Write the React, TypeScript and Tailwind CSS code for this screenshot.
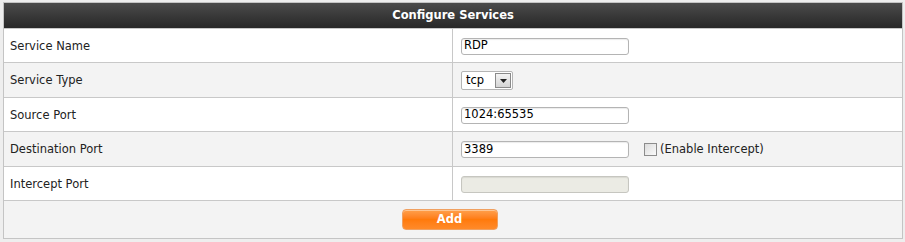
const font = { fontFamily: '"DejaVu Sans", Verdana, sans-serif' }

interface RowProps {
  label: string
  shaded?: boolean
  height: string
  children?: React.ReactNode
}

function FormRow({ label, shaded, height, children }: RowProps) {
  return (
    <div className={`flex border-b border-[#c8c8c8] ${height} ${shaded ? 'bg-[#f3f3f3]' : 'bg-white'}`}>
      <div className="flex w-[449px] items-center border-r border-[#c8c8c8] pl-[6px] pt-[2px] text-[11.5px] text-[#222]">
        {label}
      </div>
      <div className="flex flex-1 items-center pl-[8px] pt-[1px]">{children}</div>
    </div>
  )
}

function TextBox({ value, disabled }: { value?: string, disabled?: boolean }) {
  return (
    <div
      className={`flex h-[17px] w-[168px] items-center rounded-[3px] border px-[2px] text-[11.5px] text-black shadow-[inset_0_1px_1px_rgba(0,0,0,0.08)] ${
        disabled ? 'border-[#c6c6c0] bg-[#ebebe4]' : 'border-[#b4b4b4] bg-white'
      }`}
    >
      {value}
    </div>
  )
}

export default function App() {
  return (
    <div className="h-[242px] w-[905px] bg-[#eeeeee] pl-[3px] pt-[2px]" style={font}>
      <div className="w-[900px] border border-[#c4c4c4]">
        {/* Header */}
        <div className="flex h-[26px] items-center justify-center border-b border-[#c8c8c8] bg-gradient-to-b from-[#4b4b4b] to-[#282828] pt-[1px] text-[11.5px] font-bold text-white">
          Configure Services
        </div>

        <FormRow label="Service Name" height="h-[34px]">
          <TextBox value="RDP" />
        </FormRow>

        <FormRow label="Service Type" shaded height="h-[35px]">
          <div className="flex h-[19px] w-[52px] items-center rounded-[2px] border border-[#b4b4b4] bg-white text-[11.5px] text-black">
            <span className="flex-1 pl-[4px]">tcp</span>
            <span className="m-[1px] flex h-[15px] w-[16px] items-center justify-center border border-[#8a8a8a] bg-gradient-to-b from-[#f4f4f4] to-[#d4d4d4]">
              <svg width="7" height="4" viewBox="0 0 7 4">
                <path d="M0 0h7L3.5 4z" fill="#222" />
              </svg>
            </span>
          </div>
        </FormRow>

        <FormRow label="Source Port" height="h-[34px]">
          <TextBox value="1024:65535" />
        </FormRow>

        <FormRow label="Destination Port" shaded height="h-[35px]">
          <TextBox value="3389" />
          <span className="ml-[15px] h-[13px] w-[13px] border border-[#8c8c8c] bg-gradient-to-br from-[#dcdcdc] to-[#fafafa]" />
          <span className="ml-[3px] text-[11.5px] text-[#222]">(Enable Intercept)</span>
        </FormRow>

        <FormRow label="Intercept Port" height="h-[34px]">
          <TextBox disabled />
        </FormRow>

        {/* Footer */}
        <div className="flex h-[37px] items-center justify-center bg-[#f3f3f3]">
          <button
            type="button"
            className="ml-[-7px] flex h-[21px] w-[96px] items-center justify-center rounded-[4px] border border-[#f0a060] bg-gradient-to-b from-[#ffa04a] via-[#ff7a0a] to-[#ff8a28] text-[11.5px] font-bold text-white shadow-[inset_0_1px_0_rgba(255,255,255,0.4)]"
          >
            Add
          </button>
        </div>
      </div>
    </div>
  )
}
